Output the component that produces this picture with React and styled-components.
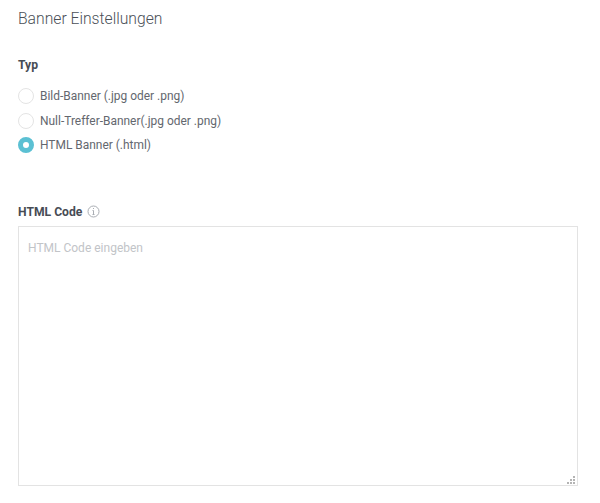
import styled, { createGlobalStyle } from "styled-components";

const GlobalStyle = createGlobalStyle`
  html, body {
    margin: 0;
    padding: 0;
    background: #fff;
  }
  body {
    font-family: Roboto, "Liberation Sans", sans-serif;
    color: #55595f;
  }
`;

const Page = styled.div`
  width: 600px;
  height: 503px;
  box-sizing: border-box;
  padding: 10px 22px 0 18px;
  overflow: hidden;
`;

const Title = styled.h2`
  margin: 0;
  font-size: 15.7px;
  line-height: 18px;
  font-weight: 300;
  color: #4a4f57;
`;

const Label = styled.div`
  display: flex;
  align-items: center;
  gap: 5px;
  font-size: 12.15px;
  line-height: 14px;
  font-weight: 700;
  color: #474c55;
`;

const TypeSection = styled.section`
  margin-top: 30px;
`;

const RadioList = styled.div`
  display: flex;
  flex-direction: column;
  gap: 8.6px;
  margin-top: 16.3px;
`;

const RadioRow = styled.label`
  display: flex;
  align-items: center;
  gap: 6px;
  height: 16px;
  font-size: 11.95px;
  color: #63676e;
`;

const RadioDot = styled.span`
  width: 16px;
  height: 16px;
  box-sizing: border-box;
  border-radius: 50%;
  background: #fff;
  border: ${(props) => (props.$checked ? "5px solid #5bc0d3" : "1px solid #e4e4e4")};
`;

const CodeSection = styled.section`
  margin-top: 51.5px;
`;

const InputWrap = styled.div`
  position: relative;
  width: 560px;
  margin-top: 7px;
`;

const CodeInput = styled.textarea`
  display: block;
  width: 100%;
  height: 260px;
  padding: 13px 9px;
  box-sizing: border-box;
  border: 1px solid #e3e3e3;
  outline: none;
  resize: none;
  font-family: inherit;
  font-size: 12px;
  line-height: 16px;
  &::placeholder {
    color: #c2c4c8;
    opacity: 1;
  }
`;

const Grip = styled.svg`
  position: absolute;
  right: 3px;
  bottom: 2px;
`;

const InfoIcon = () => (
  <svg width="13" height="13" viewBox="0 0 13 13" fill="none" stroke="#a9adb3">
    <circle cx="6.5" cy="6.5" r="5.5" />
    <path d="M6.5 5.5v4M5.5 9.5h2M5.5 5.5h1M6.5 3v1" />
  </svg>
);

const ResizeGrip = () => (
  <Grip width="8" height="8" viewBox="0 0 8 8" fill="#b4b4b4">
    <rect x="6" y="0" width="2" height="2" />
    <rect x="3" y="3" width="2" height="2" />
    <rect x="6" y="3" width="2" height="2" />
    <rect x="0" y="6" width="2" height="2" />
    <rect x="3" y="6" width="2" height="2" />
    <rect x="6" y="6" width="2" height="2" />
  </Grip>
);

const options = [
  { label: "Bild-Banner (.jpg oder .png)" },
  { label: "Null-Treffer-Banner(.jpg oder .png)" },
  { label: "HTML Banner (.html)", checked: true },
];

const App = () => {
  return (
    <Page>
      <GlobalStyle />
      <Title>Banner Einstellungen</Title>
      <TypeSection>
        <Label>Typ</Label>
        <RadioList>
          {options.map((option) => (
            <RadioRow key={option.label}>
              <RadioDot $checked={option.checked} />
              {option.label}
            </RadioRow>
          ))}
        </RadioList>
      </TypeSection>
      <CodeSection>
        <Label>
          HTML Code
          <InfoIcon />
        </Label>
        <InputWrap>
          <CodeInput placeholder="HTML Code eingeben" />
          <ResizeGrip />
        </InputWrap>
      </CodeSection>
    </Page>
  );
};

export default App;
